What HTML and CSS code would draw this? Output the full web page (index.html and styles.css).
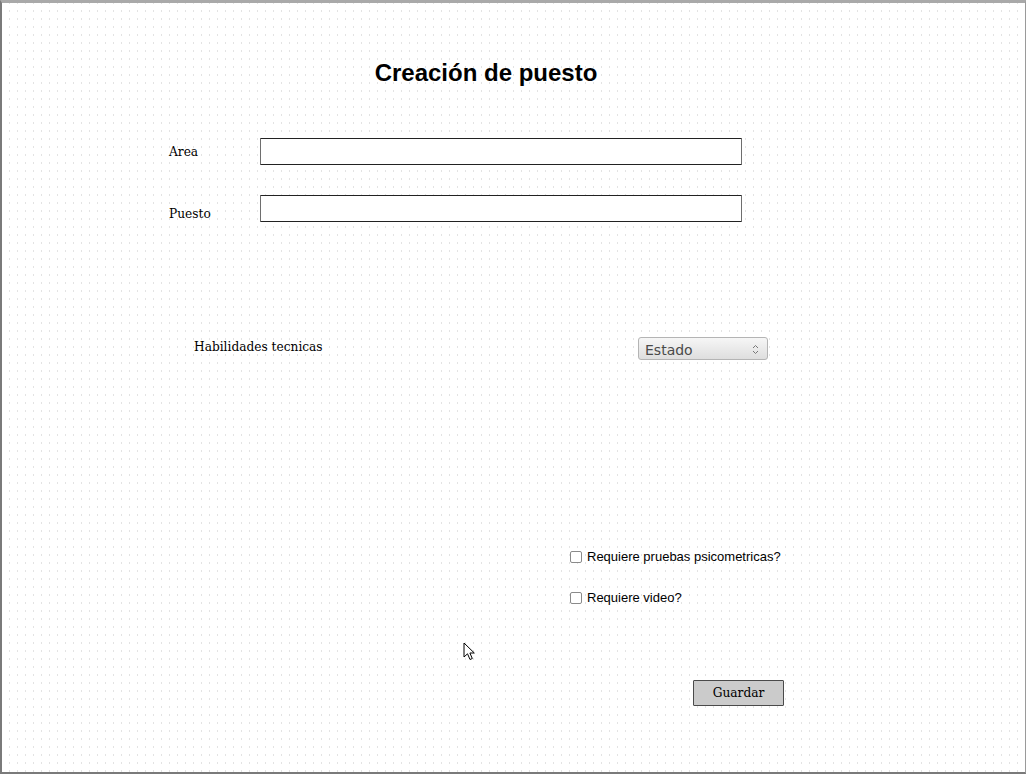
FILE: index.html
```html
<!DOCTYPE html>
<html lang="es">
<head>
<meta charset="utf-8">
<title>Creación de puesto</title>
<link rel="stylesheet" href="styles.css">
</head>
<body>
<div class="window">
  <form class="form">
    <h1 class="title">Creación de puesto</h1>
    <div class="field field-area">
      <label class="label">Area</label>
      <div class="input"></div>
    </div>
    <div class="field field-puesto">
      <label class="label label-low">Puesto</label>
      <div class="input"></div>
    </div>
    <div class="skills">
      <span class="label">Habilidades tecnicas</span>
      <div class="select">
        <span>Estado</span>
        <svg class="arrows" width="7" height="11" viewBox="0 0 7 11"><path d="M1 4 L3.5 1.5 L6 4" fill="none" stroke="#777" stroke-width="1"/><path d="M1 7 L3.5 9.5 L6 7" fill="none" stroke="#777" stroke-width="1"/></svg>
      </div>
    </div>
    <label class="check check-1"><span class="box"></span>Requiere pruebas psicometricas?</label>
    <label class="check check-2"><span class="box"></span>Requiere video?</label>
    <div class="button">Guardar</div>
  </form>
  <svg class="cursor" width="13" height="20" viewBox="0 0 13 20"><path d="M1 1 L1 15 L4.5 11.8 L7 17.5 L9.3 16.5 L6.9 11 L11.3 11 Z" fill="#fff" stroke="#000" stroke-width="1" stroke-linejoin="round"/></svg>
</div>
</body>
</html>
```

FILE: styles.css
```css
html, body {
  margin: 0;
  padding: 0;
}
body {
  width: 1026px;
  height: 774px;
  overflow: hidden;
  background: #fff;
}
.window {
  position: relative;
  box-sizing: border-box;
  width: 1026px;
  height: 774px;
  border-top: 3px solid #a9a9a9;
  border-left: 2px solid #7a7a7a;
  border-right: 1px solid #9a9a9a;
  border-bottom: 2px solid #7a7a7a;
  background-color: #e3e3e3;
  background-image:
    linear-gradient(to right, transparent 1px, #fff 1px),
    linear-gradient(to bottom, transparent 2px, #fff 2px);
  background-size: 8px 8px, 8px 8px;
  background-position: 7px 7px, 7px 7px;
}
.form {
  display: flex;
  flex-direction: column;
  align-items: flex-start;
  width: 634px;
  margin-left: 167px;
  padding-top: 56px;
}
.title {
  align-self: stretch;
  margin: 0;
  height: 28px;
  font: bold 24px/28px "Liberation Sans", Arial, sans-serif;
  text-align: center;
  color: #000;
}
.field {
  display: flex;
  align-items: center;
}
.field-area { margin-top: 51px; }
.field-puesto { margin-top: 30px; }
.label {
  font: 12.2px/16px "DejaVu Serif", serif;
  color: #000;
}
.field .label {
  width: 91px;
}
.label-low {
  position: relative;
  top: 5px;
}
.input {
  box-sizing: border-box;
  width: 482px;
  height: 27px;
  background: #fff;
  border: 1px solid #6e6e6e;
  border-top-color: #222;
  border-bottom-color: #222;
  border-radius: 1px;
}
.skills {
  display: flex;
  justify-content: space-between;
  align-items: center;
  margin-top: 115px;
  margin-left: 25px;
  width: 574px;
}
.skills .label {
  position: relative;
  top: -2px;
}
.select {
  box-sizing: border-box;
  width: 130px;
  height: 23px;
  display: flex;
  align-items: center;
  justify-content: space-between;
  padding: 2px 8px 0 6px;
  border: 1px solid #b4b4b4;
  border-radius: 3px;
  background: linear-gradient(#f6f6f6, #dedede);
  font: 14px/16px "DejaVu Sans", "Noto Sans", sans-serif;
  color: #4a4a4a;
}
.check {
  display: flex;
  align-items: center;
  height: 16px;
  margin-left: 401px;
  font: 13px/16px "Liberation Sans", Arial, sans-serif;
  color: #000;
}
.check-1 { margin-top: 189px; }
.check-2 { margin-top: 25px; }
.box {
  box-sizing: border-box;
  width: 12px;
  height: 12px;
  margin-right: 5px;
  border: 1px solid #8a8a8a;
  border-radius: 2px;
  background: #fff;
}
.button {
  box-sizing: border-box;
  width: 91px;
  height: 26px;
  margin-top: 74px;
  margin-left: 524px;
  background: #cbcbcb;
  border: 1px solid #4a4a4a;
  border-radius: 1px;
  font: 12.2px/24px "DejaVu Serif", serif;
  text-align: center;
  color: #000;
}
.cursor {
  position: absolute;
  left: 461px;
  top: 639px;
}
```
